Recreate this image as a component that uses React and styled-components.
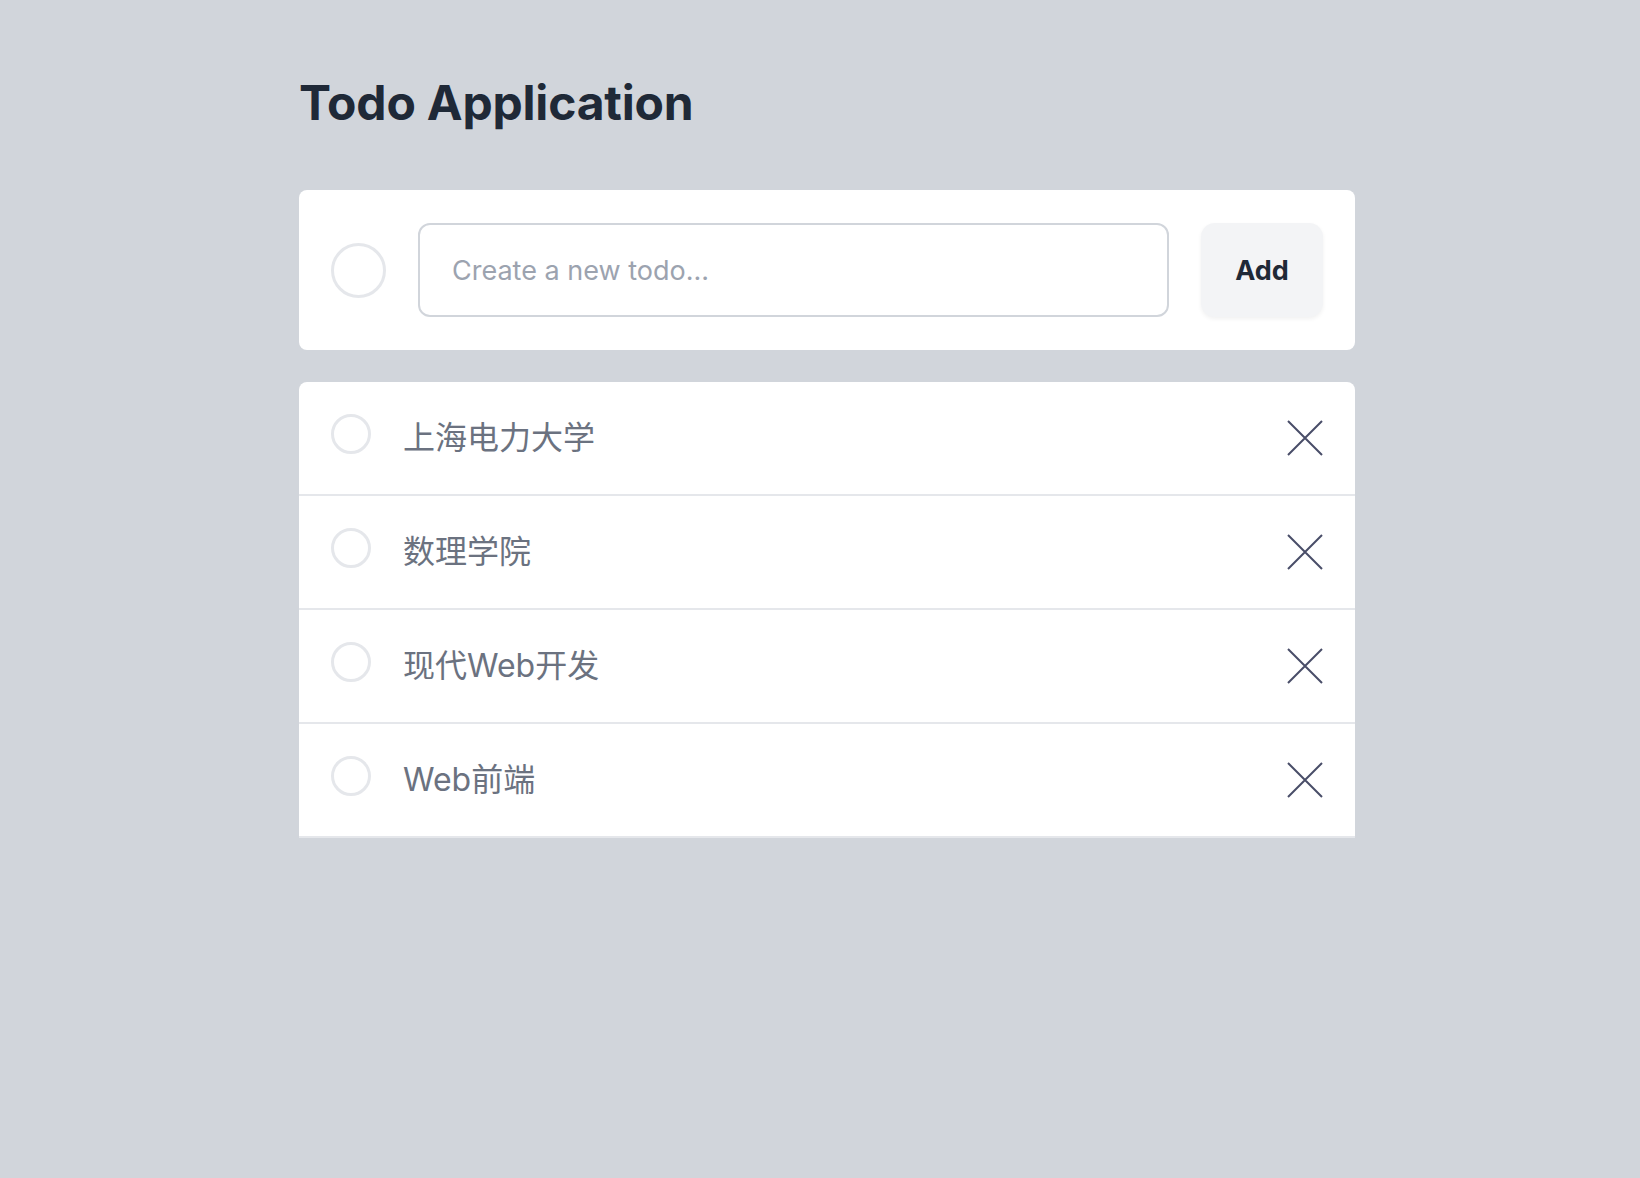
import React from "react";
import styled, { createGlobalStyle } from "styled-components";

const Global = createGlobalStyle`
  html, body { margin: 0; padding: 0; background: #d1d5db; }
  body { font-family: Inter, "Noto Sans CJK SC", sans-serif; }
  * { box-sizing: border-box; }
`;

const Page = styled.main`
  min-height: 1178px;
  background: #d1d5db;
  padding: 74px 0 0 299px;
`;

const Container = styled.div`
  width: 1056px;
  display: flex;
  flex-direction: column;
`;

const Title = styled.h1`
  margin: 0 0 58px;
  font-family: Inter, sans-serif;
  font-weight: 700;
  font-size: 48px;
  line-height: 58px;
  color: #1f2937;
  letter-spacing: -0.2px;
`;

const Card = styled.form`
  background: #fff;
  border-radius: 8px;
  padding: 33px 32px;
  display: flex;
  align-items: center;
  gap: 32px;
  margin-bottom: 32px;
`;

const Circle = styled.span`
  flex: none;
  width: ${(p) => p.$size}px;
  height: ${(p) => p.$size}px;
  border-radius: 50%;
  border: 3px solid #e5e7eb;
  background: #fff;
`;

const Input = styled.input`
  flex: 1;
  height: 94px;
  border: 2px solid #d1d5db;
  border-radius: 12px;
  padding: 0 32px;
  font-family: Inter, sans-serif;
  font-size: 27px;
  color: #374151;
  outline: none;
  &::placeholder { color: #9ca3af; }
`;

const AddButton = styled.button`
  flex: none;
  width: 122px;
  height: 94px;
  border: none;
  border-radius: 14px;
  background: #f3f4f6;
  box-shadow: 0 2px 4px rgba(0, 0, 0, 0.06);
  font-family: Inter, sans-serif;
  font-weight: 700;
  font-size: 27px;
  color: #1f2937;
`;

const List = styled.ul`
  list-style: none;
  margin: 0;
  padding: 0;
  background: #fff;
  border-radius: 8px 8px 0 0;
  overflow: hidden;
`;

const Row = styled.li`
  display: flex;
  align-items: flex-start;
  gap: 32px;
  padding: 32px;
  border-bottom: 2px solid #e5e7eb;
`;

const Text = styled.span`
  flex: 1;
  font-family: Inter, "Noto Sans CJK SC", sans-serif;
  font-size: 32px;
  line-height: 48px;
  color: #6b7280;
`;

const Remove = styled.button`
  flex: none;
  width: 36px;
  height: 48px;
  padding: 0;
  border: none;
  background: none;
  display: flex;
  align-items: center;
  justify-content: flex-end;
  color: #494d68;
`;

const todos = ["上海电力大学", "数理学院", "现代Web开发", "Web前端"];

const XIcon = () => (
  <svg width="36" height="36" viewBox="0 0 36 36" fill="none" stroke="currentColor" strokeWidth="2">
    <path d="M1 1 L35 35 M35 1 L1 35" />
  </svg>
);

export default function App() {
  return (
    <>
      <Global />
      <Page>
        <Container>
          <Title>Todo Application</Title>
          <Card onSubmit={(e) => e.preventDefault()}>
            <Circle $size={55} />
            <Input placeholder="Create a new todo..." />
            <AddButton type="submit">Add</AddButton>
          </Card>
          <List>
            {todos.map((t) => (
              <Row key={t}>
                <Circle $size={40} />
                <Text>{t}</Text>
                <Remove aria-label="delete">
                  <XIcon />
                </Remove>
              </Row>
            ))}
          </List>
        </Container>
      </Page>
    </>
  );
}
